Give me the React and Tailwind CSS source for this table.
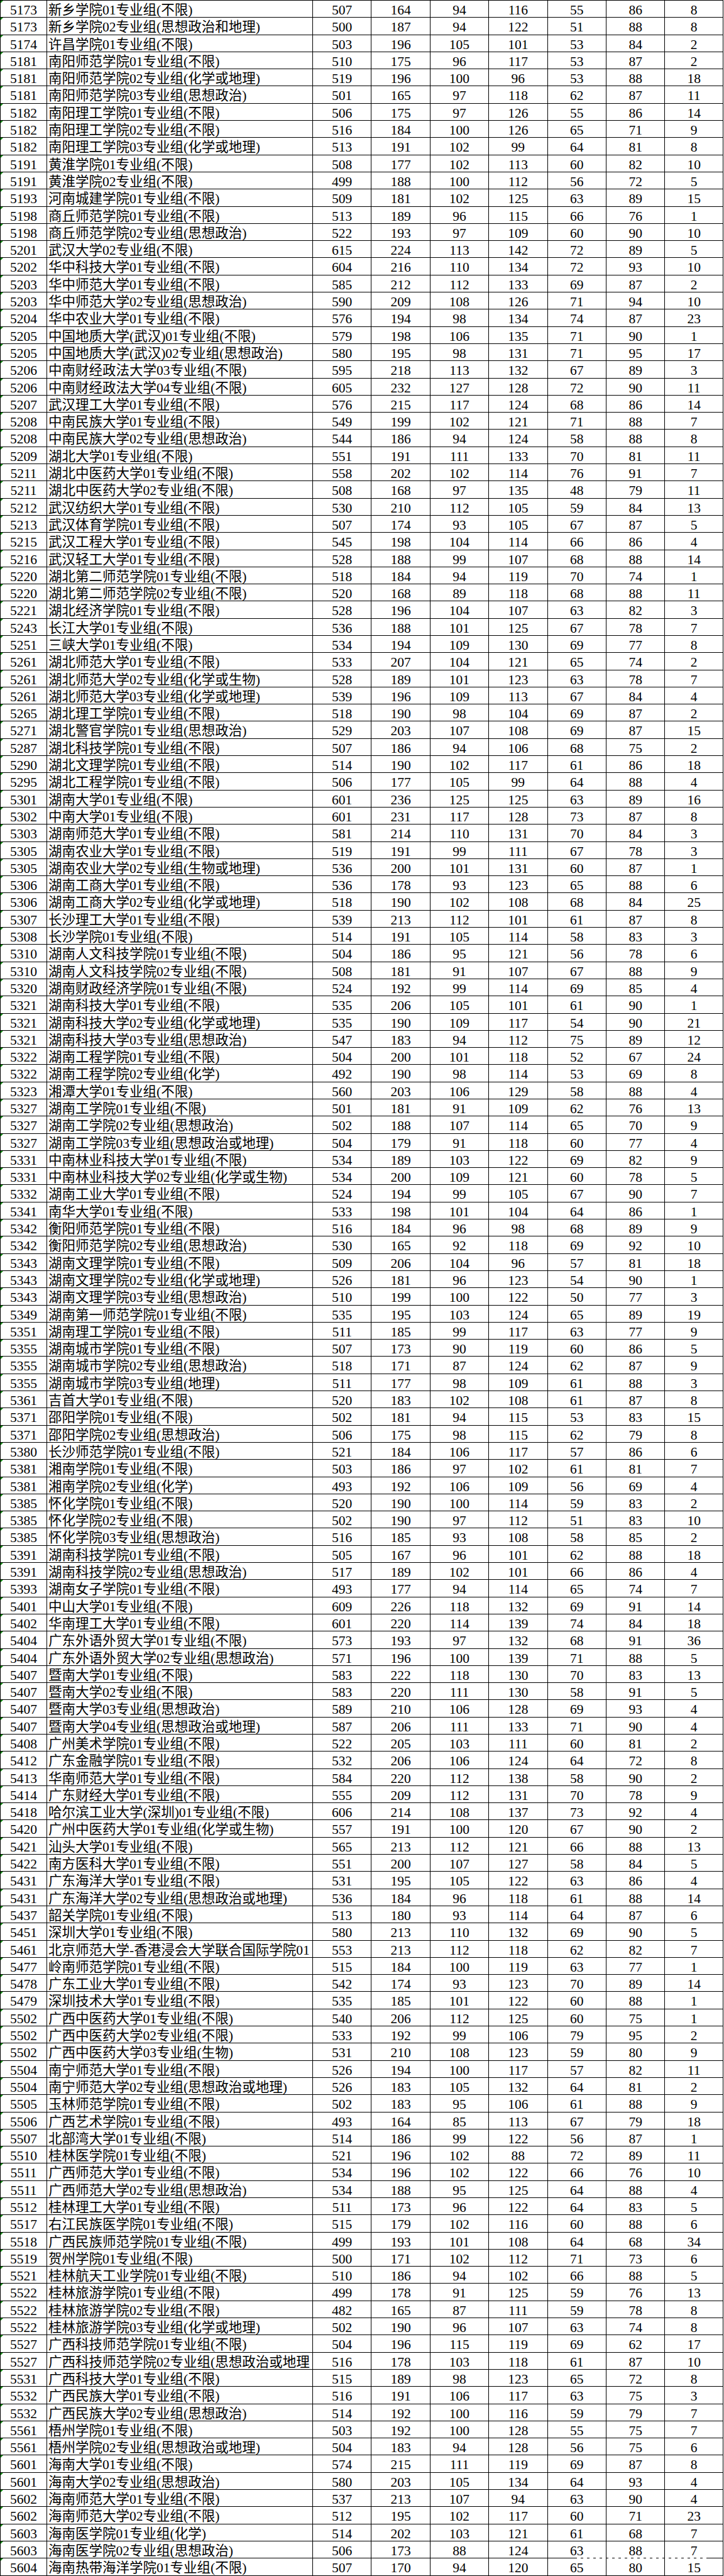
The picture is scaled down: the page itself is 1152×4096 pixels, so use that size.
import React from "react";

const DATA = `5173|新乡学院01专业组(不限)|507|164|94|116|55|86|8
5173|新乡学院02专业组(思想政治和地理)|500|187|94|122|51|88|8
5174|许昌学院01专业组(不限)|503|196|105|101|53|84|2
5181|南阳师范学院01专业组(不限)|510|175|96|117|53|87|2
5181|南阳师范学院02专业组(化学或地理)|519|196|100|96|53|88|18
5181|南阳师范学院03专业组(思想政治)|501|165|97|118|62|87|11
5182|南阳理工学院01专业组(不限)|506|175|97|126|55|86|14
5182|南阳理工学院02专业组(不限)|516|184|100|126|65|71|9
5182|南阳理工学院03专业组(化学或地理)|513|191|102|99|64|81|8
5191|黄淮学院01专业组(不限)|508|177|102|113|60|82|10
5191|黄淮学院02专业组(不限)|499|188|100|112|56|72|5
5193|河南城建学院01专业组(不限)|509|181|102|125|63|89|15
5198|商丘师范学院01专业组(不限)|513|189|96|115|66|76|1
5198|商丘师范学院02专业组(思想政治)|522|193|97|109|60|90|10
5201|武汉大学02专业组(不限)|615|224|113|142|72|89|5
5202|华中科技大学01专业组(不限)|604|216|110|134|72|93|10
5203|华中师范大学01专业组(不限)|585|212|112|133|69|87|2
5203|华中师范大学02专业组(思想政治)|590|209|108|126|71|94|10
5204|华中农业大学01专业组(不限)|576|194|98|134|74|87|23
5205|中国地质大学(武汉)01专业组(不限)|579|198|106|135|71|90|1
5205|中国地质大学(武汉)02专业组(思想政治)|580|195|98|131|71|95|17
5206|中南财经政法大学03专业组(不限)|595|218|113|132|67|89|3
5206|中南财经政法大学04专业组(不限)|605|232|127|128|72|90|11
5207|武汉理工大学01专业组(不限)|576|215|117|124|68|86|14
5208|中南民族大学01专业组(不限)|549|199|102|121|71|88|7
5208|中南民族大学02专业组(思想政治)|544|186|94|124|58|88|8
5209|湖北大学01专业组(不限)|551|191|111|133|70|81|11
5211|湖北中医药大学01专业组(不限)|558|202|102|114|76|91|7
5211|湖北中医药大学02专业组(不限)|508|168|97|135|48|79|11
5212|武汉纺织大学01专业组(不限)|530|210|112|105|59|84|13
5213|武汉体育学院01专业组(不限)|507|174|93|105|67|87|5
5215|武汉工程大学01专业组(不限)|545|198|104|114|66|86|4
5216|武汉轻工大学01专业组(不限)|528|188|99|107|68|88|14
5220|湖北第二师范学院01专业组(不限)|518|184|94|119|70|74|1
5220|湖北第二师范学院02专业组(不限)|520|168|89|118|68|88|11
5221|湖北经济学院01专业组(不限)|528|196|104|107|63|82|3
5243|长江大学01专业组(不限)|536|188|101|125|67|78|7
5251|三峡大学01专业组(不限)|534|194|109|130|69|77|8
5261|湖北师范大学01专业组(不限)|533|207|104|121|65|74|2
5261|湖北师范大学02专业组(化学或生物)|528|189|101|123|63|78|7
5261|湖北师范大学03专业组(化学或地理)|539|196|109|113|67|84|4
5265|湖北理工学院01专业组(不限)|518|190|98|104|69|87|2
5271|湖北警官学院01专业组(思想政治)|529|203|107|108|69|87|15
5287|湖北科技学院01专业组(不限)|507|186|94|106|68|75|2
5290|湖北文理学院01专业组(不限)|514|190|102|117|61|86|18
5295|湖北工程学院01专业组(不限)|506|177|105|99|64|88|4
5301|湖南大学01专业组(不限)|601|236|125|125|63|89|16
5302|中南大学01专业组(不限)|601|231|117|128|73|87|8
5303|湖南师范大学01专业组(不限)|581|214|110|131|70|84|3
5305|湖南农业大学01专业组(不限)|519|191|99|111|67|78|3
5305|湖南农业大学02专业组(生物或地理)|536|200|101|131|60|87|1
5306|湖南工商大学01专业组(不限)|536|178|93|123|65|88|6
5306|湖南工商大学02专业组(化学或地理)|518|190|102|108|68|84|25
5307|长沙理工大学01专业组(不限)|539|213|112|101|61|87|8
5308|长沙学院01专业组(不限)|514|191|105|114|58|83|3
5310|湖南人文科技学院01专业组(不限)|504|186|95|121|56|78|6
5310|湖南人文科技学院02专业组(不限)|508|181|91|107|67|88|9
5320|湖南财政经济学院01专业组(不限)|524|192|99|114|69|85|4
5321|湖南科技大学01专业组(不限)|535|206|105|101|61|90|1
5321|湖南科技大学02专业组(化学或地理)|535|190|109|117|54|90|21
5321|湖南科技大学03专业组(思想政治)|547|183|94|112|75|89|12
5322|湖南工程学院01专业组(不限)|504|200|101|118|52|67|24
5322|湖南工程学院02专业组(化学)|492|190|98|114|53|69|8
5323|湘潭大学01专业组(不限)|560|203|106|129|58|88|4
5327|湖南工学院01专业组(不限)|501|181|91|109|62|76|13
5327|湖南工学院02专业组(思想政治)|502|188|107|114|65|70|9
5327|湖南工学院03专业组(思想政治或地理)|504|179|91|118|60|77|4
5331|中南林业科技大学01专业组(不限)|534|189|103|122|69|82|9
5331|中南林业科技大学02专业组(化学或生物)|534|200|109|121|60|78|5
5332|湖南工业大学01专业组(不限)|524|194|99|105|67|90|7
5341|南华大学01专业组(不限)|533|198|101|104|64|86|1
5342|衡阳师范学院01专业组(不限)|516|184|96|98|68|89|9
5342|衡阳师范学院02专业组(思想政治)|530|165|92|118|69|92|10
5343|湖南文理学院01专业组(不限)|509|206|104|96|57|81|18
5343|湖南文理学院02专业组(化学或地理)|526|181|96|123|54|90|1
5343|湖南文理学院03专业组(思想政治)|510|199|100|122|50|77|3
5349|湖南第一师范学院01专业组(不限)|535|195|103|124|65|89|19
5351|湖南理工学院01专业组(不限)|511|185|99|117|63|77|9
5355|湖南城市学院01专业组(不限)|507|173|90|119|60|86|5
5355|湖南城市学院02专业组(思想政治)|518|171|87|124|62|87|9
5355|湖南城市学院03专业组(地理)|511|177|98|109|61|88|3
5361|吉首大学01专业组(不限)|520|183|102|108|61|87|8
5371|邵阳学院01专业组(不限)|502|181|94|115|53|83|15
5371|邵阳学院02专业组(思想政治)|506|175|98|115|62|79|8
5380|长沙师范学院01专业组(不限)|521|184|106|117|57|86|6
5381|湘南学院01专业组(不限)|503|186|97|102|61|81|7
5381|湘南学院02专业组(化学)|493|192|106|109|56|69|4
5385|怀化学院01专业组(不限)|520|190|100|114|59|83|2
5385|怀化学院02专业组(不限)|502|190|97|112|51|83|10
5385|怀化学院03专业组(思想政治)|516|185|93|108|58|85|2
5391|湖南科技学院01专业组(不限)|505|167|96|101|62|88|18
5391|湖南科技学院02专业组(思想政治)|517|189|102|101|66|86|4
5393|湖南女子学院01专业组(不限)|493|177|94|114|65|74|7
5401|中山大学01专业组(不限)|609|226|118|132|69|91|14
5402|华南理工大学01专业组(不限)|601|220|114|139|74|84|18
5404|广东外语外贸大学01专业组(不限)|573|193|97|132|68|91|36
5404|广东外语外贸大学02专业组(思想政治)|571|196|100|139|71|88|5
5407|暨南大学01专业组(不限)|583|222|118|130|70|83|13
5407|暨南大学02专业组(不限)|583|220|111|130|58|91|5
5407|暨南大学03专业组(思想政治)|589|210|106|128|69|93|4
5407|暨南大学04专业组(思想政治或地理)|587|206|111|133|71|90|4
5408|广州美术学院01专业组(不限)|522|205|103|111|60|81|2
5412|广东金融学院01专业组(不限)|532|206|106|124|64|72|8
5413|华南师范大学01专业组(不限)|584|220|112|138|58|90|2
5414|广东财经大学01专业组(不限)|555|209|112|131|70|78|9
5418|哈尔滨工业大学(深圳)01专业组(不限)|606|214|108|137|73|92|4
5420|广州中医药大学01专业组(化学或生物)|557|191|100|120|67|90|2
5421|汕头大学01专业组(不限)|565|213|112|121|66|88|13
5422|南方医科大学01专业组(不限)|551|200|107|127|58|84|5
5431|广东海洋大学01专业组(不限)|531|195|105|122|63|86|4
5431|广东海洋大学02专业组(思想政治或地理)|536|184|96|118|61|88|14
5437|韶关学院01专业组(不限)|513|180|93|114|64|87|6
5451|深圳大学01专业组(不限)|580|213|110|132|69|90|5
5461|北京师范大学-香港浸会大学联合国际学院01|553|213|112|118|62|82|7
5477|岭南师范学院01专业组(不限)|515|184|100|119|63|77|1
5478|广东工业大学01专业组(不限)|542|174|93|123|70|89|14
5479|深圳技术大学01专业组(不限)|535|185|101|122|60|88|1
5502|广西中医药大学01专业组(不限)|540|206|112|125|60|75|1
5502|广西中医药大学02专业组(不限)|533|192|99|106|79|95|2
5502|广西中医药大学03专业组(生物)|531|210|108|123|59|80|9
5504|南宁师范大学01专业组(不限)|526|194|100|117|57|82|11
5504|南宁师范大学02专业组(思想政治或地理)|526|183|105|132|64|81|2
5505|玉林师范学院01专业组(不限)|502|183|95|106|61|88|9
5506|广西艺术学院01专业组(不限)|493|164|85|113|67|79|18
5507|北部湾大学01专业组(不限)|514|186|99|122|56|87|1
5510|桂林医学院01专业组(不限)|521|196|102|88|72|89|11
5511|广西师范大学01专业组(不限)|534|196|102|122|66|76|10
5511|广西师范大学02专业组(思想政治)|534|188|95|125|64|88|4
5512|桂林理工大学01专业组(不限)|511|173|96|122|64|83|5
5517|右江民族医学院01专业组(不限)|515|179|102|116|60|88|6
5518|广西民族师范学院01专业组(不限)|499|193|101|108|64|68|34
5519|贺州学院01专业组(不限)|500|171|102|112|71|73|6
5521|桂林航天工业学院01专业组(不限)|510|186|94|102|66|88|5
5522|桂林旅游学院01专业组(不限)|499|178|91|125|59|76|13
5522|桂林旅游学院02专业组(不限)|482|165|87|111|59|78|8
5522|桂林旅游学院03专业组(化学或地理)|502|190|96|107|63|74|8
5527|广西科技师范学院01专业组(不限)|504|196|115|119|69|62|17
5527|广西科技师范学院02专业组(思想政治或地理|516|178|103|118|61|87|10
5531|广西科技大学01专业组(不限)|515|189|98|123|65|72|8
5532|广西民族大学01专业组(不限)|516|191|106|117|63|75|3
5532|广西民族大学02专业组(思想政治)|514|192|100|116|59|79|7
5561|梧州学院01专业组(不限)|503|192|100|128|55|75|7
5561|梧州学院02专业组(思想政治或地理)|504|183|94|128|56|75|6
5601|海南大学01专业组(不限)|574|215|111|119|69|87|8
5601|海南大学02专业组(思想政治)|580|203|105|134|64|93|4
5602|海南师范大学01专业组(不限)|537|213|107|94|63|90|4
5602|海南师范大学02专业组(不限)|512|195|102|117|60|71|23
5603|海南医学院01专业组(化学)|514|202|103|121|61|68|7
5603|海南医学院02专业组(思想政治)|506|173|88|124|63|88|7
5604|海南热带海洋学院01专业组(不限)|507|170|94|120|65|80|15`;

const ROWS = DATA.split("\n").map((l) => l.split("|"));

function Row({ cells }) {
  const [code, name, ...nums] = cells;
  return (
    <div className="flex h-[27.3px] border-b border-black">
      <div className="relative flex w-[74px] shrink-0 justify-center overflow-hidden border-r border-black pt-[5px]">
        <span className="absolute left-0 top-0 h-0 w-0 border-r-[4px] border-t-[4px] border-r-transparent border-t-[#108a10]" />
        {code}
      </div>
      <div className="w-[423px] shrink-0 overflow-hidden whitespace-nowrap border-r border-black pl-[2px] pt-[5px]">
        {name}
      </div>
      {nums.map((n, i) => (
        <div
          key={i}
          className={
            i === 6
              ? "flex flex-1 justify-center border-r border-black pt-[5px]"
              : "flex w-[93.4px] shrink-0 justify-center border-r border-black pt-[5px]"
          }
        >
          {n}
        </div>
      ))}
    </div>
  );
}

export default function App() {
  return (
    <div className="relative min-h-[4096px] w-full bg-white">
      <div className="w-[1151px] border-l border-t border-black bg-white font-['Liberation_Serif','Noto_Sans_CJK_SC',serif] text-[21.5px] leading-none text-black">
        {ROWS.map((r, i) => (
          <Row key={i} cells={r} />
        ))}
      </div>
      <div className="absolute left-[918px] top-[4067px] w-[206px] border-t-2 border-dashed border-white" />
    </div>
  );
}
